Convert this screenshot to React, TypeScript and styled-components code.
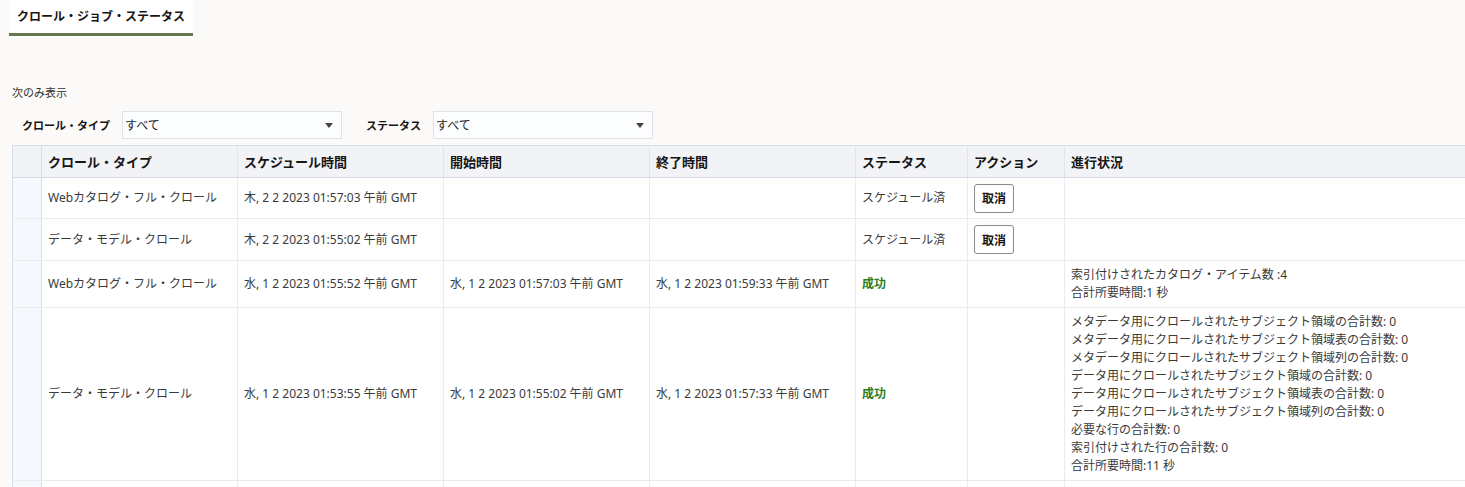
import React from "react";
import styled, { createGlobalStyle } from "styled-components";

const Global = createGlobalStyle`
  html, body { margin: 0; padding: 0; background: #fbfaf8; }
  body { font-family: "Noto Sans", "Noto Sans CJK JP", sans-serif; color: #333; overflow: hidden; }
`;

const Page = styled.div`
  width: 1465px;
  height: 487px;
  overflow: hidden;
  display: flex;
  flex-direction: column;
`;

const TabBar = styled.div`
  display: flex;
  padding-left: 9px;
`;

const Tab = styled.div`
  background: #fff;
  padding: 7px 8px 2px 8px;
  height: 38px;
  box-sizing: border-box;
  width: 184px;
  display: flex;
  flex-direction: column;
  justify-content: space-between;
`;

const TabLabel = styled.span`
  font-size: 12px;
  font-weight: 700;
  color: #161513;
  line-height: 20px;
`;

const TabLine = styled.div`
  height: 3px;
  margin: 0 -8px;
  background: #637a4f;
`;

const Filters = styled.div`
  padding: 47px 0 0 12px;
  display: flex;
  flex-direction: column;
  gap: 10px;
`;

const Caption = styled.div`
  font-size: 11px;
  color: #333;
  line-height: 16px;
`;

const FilterRow = styled.div`
  display: flex;
  align-items: center;
  padding-left: 10px;
`;

const FilterLabel = styled.span`
  font-size: 11px;
  font-weight: 700;
  color: #161513;
  margin-right: 12px;
`;

const Select = styled.div<{ $width: number; $gap?: number }>`
  width: ${(p) => p.$width}px;
  height: 28px;
  box-sizing: border-box;
  border: 1px solid #dfe3e8;
  background: #fcfdff;
  display: flex;
  align-items: center;
  justify-content: space-between;
  padding: 0 8px 0 2px;
  font-size: 12px;
  color: #222;
  margin-right: ${(p) => p.$gap ?? 0}px;
`;

const Arrow = styled.span`
  width: 0;
  height: 0;
  border-left: 4px solid transparent;
  border-right: 4px solid transparent;
  border-top: 5px solid #444;
`;

const TableWrap = styled.div`
  margin: 6px 0 0 12px;
`;

const Table = styled.table`
  border-collapse: collapse;
  table-layout: fixed;
  width: 1700px;
  font-size: 12px;
  background: #fff;
`;

const Th = styled.th`
  background: #f1f3f7;
  height: 31px;
  text-align: left;
  padding: 0 6px;
  font-size: 13px;
  font-weight: 700;
  color: #161513;
  border-top: 1px solid #d8dee6;
  border-bottom: 1px solid #d4dbe3;
  border-right: 1px solid #e1e5ea;
`;

const GutterTh = styled(Th)`
  border-left: 1px solid #d8dee6;
  border-right: 1px solid #d8dee6;
`;

const Td = styled.td<{ $h?: number }>`
  height: ${(p) => (p.$h ? p.$h : 40)}px;
  padding: 0 6px;
  vertical-align: middle;
  color: #3a3a3a;
  border-bottom: 1px solid #e9ebee;
  border-right: 1px solid #e9ebee;
  line-height: 18px;
`;

const GutterTd = styled(Td)`
  background: #f5f8fc;
  border-left: 1px solid #d8dee6;
  border-right: 1px solid #d8dee6;
`;

const Success = styled.span`
  color: #2b7d1d;
  font-weight: 700;
`;

const CancelButton = styled.button`
  font-family: inherit;
  font-size: 12px;
  font-weight: 700;
  color: #161513;
  background: #fff;
  border: 1px solid #8a8a8a;
  border-radius: 3px;
  height: 29px;
  width: 40px;
  padding: 0;
  display: block;
`;

const Progress = styled.div`
  padding: 4px 0;
  display: flex;
  flex-direction: column;
`;

type Row = {
  type: string;
  sched: string;
  start: string;
  end: string;
  status: "scheduled" | "success";
  progress: string[];
  h: number;
};

const rows: Row[] = [
  { type: "Webカタログ・フル・クロール", sched: "木, 2 2 2023 01:57:03 午前 GMT", start: "", end: "", status: "scheduled", progress: [], h: 40 },
  { type: "データ・モデル・クロール", sched: "木, 2 2 2023 01:55:02 午前 GMT", start: "", end: "", status: "scheduled", progress: [], h: 41 },
  {
    type: "Webカタログ・フル・クロール",
    sched: "水, 1 2 2023 01:55:52 午前 GMT",
    start: "水, 1 2 2023 01:57:03 午前 GMT",
    end: "水, 1 2 2023 01:59:33 午前 GMT",
    status: "success",
    progress: ["索引付けされたカタログ・アイテム数 :4", "合計所要時間:1 秒"],
    h: 46,
  },
  {
    type: "データ・モデル・クロール",
    sched: "水, 1 2 2023 01:53:55 午前 GMT",
    start: "水, 1 2 2023 01:55:02 午前 GMT",
    end: "水, 1 2 2023 01:57:33 午前 GMT",
    status: "success",
    progress: [
      "メタデータ用にクロールされたサブジェクト領域の合計数: 0",
      "メタデータ用にクロールされたサブジェクト領域表の合計数: 0",
      "メタデータ用にクロールされたサブジェクト領域列の合計数: 0",
      "データ用にクロールされたサブジェクト領域の合計数: 0",
      "データ用にクロールされたサブジェクト領域表の合計数: 0",
      "データ用にクロールされたサブジェクト領域列の合計数: 0",
      "必要な行の合計数: 0",
      "索引付けされた行の合計数: 0",
      "合計所要時間:11 秒",
    ],
    h: 172,
  },
  { type: "", sched: "", start: "", end: "", status: "scheduled", progress: [], h: 40 },
];

export default function App() {
  return (
    <Page>
      <Global />
      <TabBar>
        <Tab>
          <TabLabel>クロール・ジョブ・ステータス</TabLabel>
          <TabLine />
        </Tab>
      </TabBar>
      <Filters>
        <Caption>次のみ表示</Caption>
        <FilterRow>
          <FilterLabel>クロール・タイプ</FilterLabel>
          <Select $width={220} $gap={24}>
            すべて
            <Arrow />
          </Select>
          <FilterLabel>ステータス</FilterLabel>
          <Select $width={220}>
            すべて
            <Arrow />
          </Select>
        </FilterRow>
      </Filters>
      <TableWrap>
        <Table>
          <colgroup>
            <col style={{ width: 29 }} />
            <col style={{ width: 196 }} />
            <col style={{ width: 206 }} />
            <col style={{ width: 206 }} />
            <col style={{ width: 206 }} />
            <col style={{ width: 112 }} />
            <col style={{ width: 97 }} />
            <col />
          </colgroup>
          <thead>
            <tr>
              <GutterTh />
              <Th>クロール・タイプ</Th>
              <Th>スケジュール時間</Th>
              <Th>開始時間</Th>
              <Th>終了時間</Th>
              <Th>ステータス</Th>
              <Th>アクション</Th>
              <Th>進行状況</Th>
            </tr>
          </thead>
          <tbody>
            {rows.map((r, i) => {
              const last = i === rows.length - 1;
              return (
                <tr key={i}>
                  <GutterTd $h={r.h} />
                  <Td $h={r.h}>{r.type}</Td>
                  <Td $h={r.h}>{r.sched}</Td>
                  <Td $h={r.h}>{r.start}</Td>
                  <Td $h={r.h}>{r.end}</Td>
                  <Td $h={r.h}>
                    {last ? null : r.status === "success" ? <Success>成功</Success> : "スケジュール済"}
                  </Td>
                  <Td $h={r.h}>{!last && r.status === "scheduled" ? <CancelButton>取消</CancelButton> : null}</Td>
                  <Td $h={r.h}>
                    {r.progress.length > 0 ? (
                      <Progress>
                        {r.progress.map((p, j) => (
                          <span key={j}>{p}</span>
                        ))}
                      </Progress>
                    ) : null}
                  </Td>
                </tr>
              );
            })}
          </tbody>
        </Table>
      </TableWrap>
    </Page>
  );
}
